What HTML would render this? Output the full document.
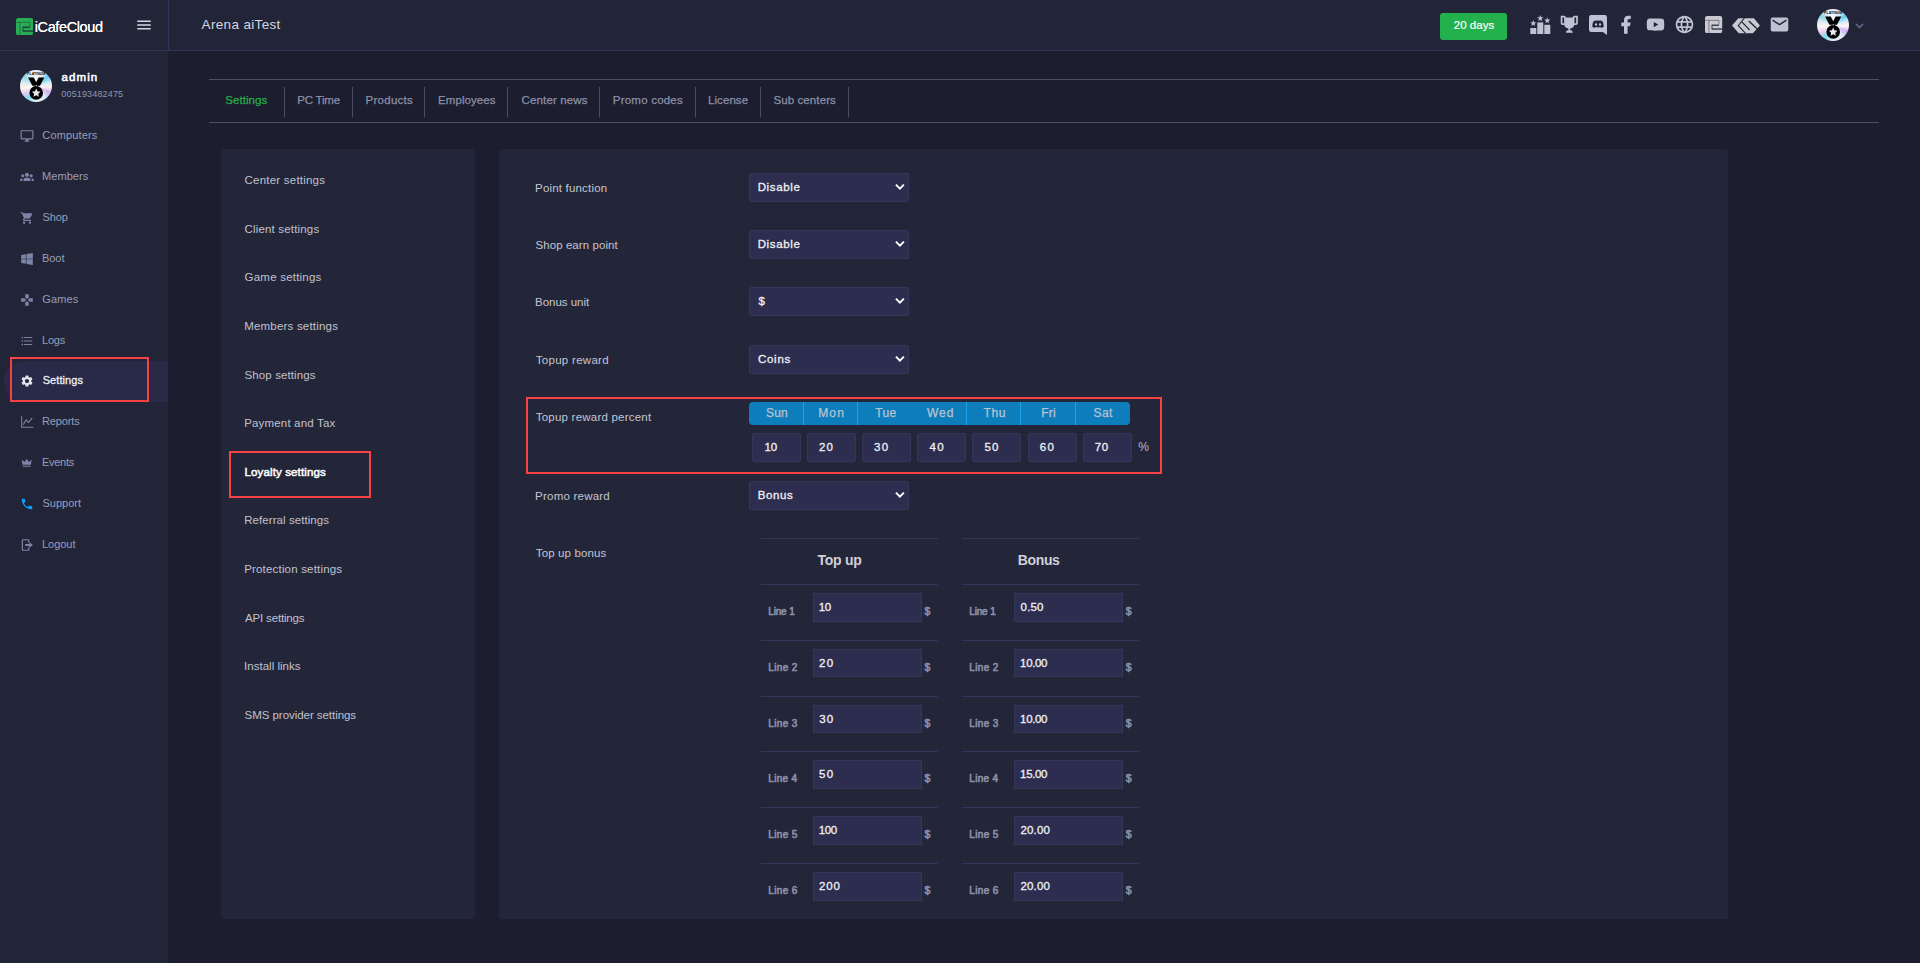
<!DOCTYPE html>
<html lang="en"><head><meta charset="utf-8"><title>iCafeCloud - Loyalty settings</title>
<style>
html,body{margin:0;padding:0}
body{width:1920px;height:963px;overflow:hidden;background:#1c1d2f;font-family:"Liberation Sans", sans-serif;position:relative}
#root{position:absolute;left:0;top:0;width:1920px;height:963px;overflow:hidden}
#root header,#root aside,#root nav,#root main{position:absolute;left:0;top:0;width:0;height:0;display:block}
#root div,#root svg,#root span.t{position:absolute}
span.t{white-space:nowrap;line-height:20px;height:20px}
</style></head><body><div id="root">

<aside class="sidebar">
<div style="left:0px;top:0px;width:168px;height:963px;background:#222538"></div>
<div style="left:4px;top:361px;width:164px;height:41px;background:#282a47;border-radius:20px 0 0 20px"></div>
<div style="left:10px;top:357px;width:139px;height:45px;border:2px solid #f94144;box-sizing:border-box"></div>
<div style="left:20.000000000000004px;top:69.8px;width:32.4px;height:32.4px;border-radius:50%;background:conic-gradient(from 0deg at 50% 52%, #eaeef5 0deg, #e4e4f4 28deg, #4ccaf0 50deg, #d9e8f4 74deg, #fcf0f3 94deg, #c9a2f0 112deg, #d6e6f2 138deg, #e8f0f7 180deg, #6fd6ee 214deg, #e5c4ee 240deg, #fdf3f1 264deg, #dfe8f0 286deg, #86d4e4 310deg, #e6eef6 338deg, #eaeef5 360deg)"></div>
<svg style="left:20.000000000000004px;top:69.8px" width="32.4" height="32.4" viewBox="0 0 32 32">
<defs><radialGradient id="hra" cx="0.5" cy="0.5" r="0.5"><stop offset="0" stop-color="#ffffff" stop-opacity="0.8"/><stop offset="0.5" stop-color="#ffffff" stop-opacity="0.3"/><stop offset="1" stop-color="#ffffff" stop-opacity="0"/></radialGradient></defs>
<circle cx="16" cy="16" r="16" fill="url(#hra)"/>
<text x="16" y="4.900" font-family="Liberation Sans, sans-serif" font-weight="700" font-size="4" text-anchor="middle" fill="#101014" textLength="18" lengthAdjust="spacingAndGlyphs">PLATINUM</text>
<path d="M8 7.300h5.600l2.400 4.800 2.400-4.800H24l-4.200 8.300h-7.600z" fill="#000"/>
<rect x="14.600" y="14.500" width="2.800" height="3" fill="#000"/>
<circle cx="16" cy="22.600" r="6.700" fill="#000"/>
<path d="M16 18.300l1.250 2.750 3 .35-2.200 2.050.6 2.950L16 24.900l-2.650 1.500.6-2.950-2.200-2.050 3-.35z" fill="#e9e6f2"/>
<circle cx="16" cy="15.600" r="0.700" fill="#cfd3e6"/>
</svg>
<svg style="left:20px;top:128.8px;color:#7d84a6;" width="14" height="14" viewBox="0 0 24 24" fill="currentColor" preserveAspectRatio="none"><path d="M21 2H3c-1.1 0-2 .9-2 2v12c0 1.1.9 2 2 2h7v2H8v2h8v-2h-2v-2h7c1.1 0 2-.9 2-2V4c0-1.1-.9-2-2-2zm0 14H3V4h18v12z"/></svg>
<svg style="left:20px;top:169.8px;color:#7d84a6;" width="14" height="14" viewBox="0 0 24 24" fill="currentColor" preserveAspectRatio="none"><circle cx="12" cy="8" r="3.500"/><circle cx="4.800" cy="9.800" r="2.700"/><circle cx="19.200" cy="9.800" r="2.700"/><path d="M5.800 19v-2c0-2.600 3.800-4 6.200-4s6.200 1.400 6.200 4v2z"/><path d="M0 19v-1.700c0-2 2.400-3.200 4.800-3.300-.6.800-.9 1.700-.9 2.900V19zM24 19v-1.700c0-2-2.400-3.200-4.800-3.300.6.800.9 1.700.9 2.900V19z"/></svg>
<svg style="left:20px;top:210.8px;color:#7d84a6;" width="14" height="14" viewBox="0 0 24 24" fill="currentColor" preserveAspectRatio="none"><path d="M7 18c-1.1 0-1.99.9-1.99 2S5.9 22 7 22s2-.9 2-2-.9-2-2-2zM1 2v2h2l3.6 7.59-1.35 2.45c-.16.28-.25.61-.25.96 0 1.1.9 2 2 2h12v-2H7.42c-.14 0-.25-.11-.25-.25l.03-.12.9-1.63h7.45c.75 0 1.41-.41 1.75-1.03l3.58-6.49c.08-.14.12-.31.12-.48 0-.55-.45-1-1-1H5.21l-.94-2H1zm16 16c-1.1 0-1.99.9-1.99 2s.89 2 1.99 2 2-.9 2-2-.9-2-2-2z"/></svg>
<svg style="left:20px;top:251.8px;color:#7d84a6;" width="14" height="14" viewBox="0 0 24 24" fill="currentColor" preserveAspectRatio="none"><path d="M2 5.2l8-1.4v7.7H2zM11 3.6L22 1.8v9.7H11zM2 12.5h8v7.7l-8-1.4zM11 12.5h11v9.7l-11-1.8z"/></svg>
<svg style="left:20px;top:292.8px;color:#7d84a6;" width="14" height="14" viewBox="0 0 24 24" fill="currentColor" preserveAspectRatio="none"><path d="M15 7.5V2H9v5.5l3 3 3-3zM7.5 9H2v6h5.5l3-3-3-3zM9 16.5V22h6v-5.5l-3-3-3 3zM16.5 9l-3 3 3 3H22V9h-5.5z"/></svg>
<svg style="left:20px;top:333.8px;color:#7d84a6;" width="14" height="14" viewBox="0 0 24 24" fill="currentColor" preserveAspectRatio="none"><path d="M4 10.5c-.83 0-1.5.67-1.5 1.5s.67 1.5 1.5 1.5 1.5-.67 1.5-1.5-.67-1.5-1.5-1.5zm0-6c-.83 0-1.5.67-1.5 1.5S3.17 7.5 4 7.5 5.5 6.83 5.5 6 4.83 4.5 4 4.5zm0 12c-.83 0-1.5.68-1.5 1.5s.68 1.5 1.5 1.5 1.5-.68 1.5-1.5-.67-1.5-1.5-1.5zM7 19h14v-2H7v2zm0-6h14v-2H7v2zm0-8v2h14V5H7z"/></svg>
<svg style="left:20px;top:373.8px;color:#e4e5ee;" width="14" height="14" viewBox="0 0 24 24" fill="currentColor" preserveAspectRatio="none"><path d="M19.14 12.94c.04-.3.06-.61.06-.94 0-.32-.02-.64-.07-.94l2.03-1.58c.18-.14.23-.41.12-.61l-1.92-3.32c-.12-.22-.37-.29-.59-.22l-2.39.96c-.5-.38-1.03-.7-1.62-.94l-.36-2.54c-.04-.24-.24-.41-.48-.41h-3.84c-.24 0-.43.17-.47.41l-.36 2.54c-.59.24-1.13.57-1.62.94l-2.39-.96c-.22-.08-.47 0-.59.22L2.74 8.87c-.12.21-.08.47.12.61l2.03 1.58c-.05.3-.09.63-.09.94s.02.64.07.94l-2.03 1.58c-.18.14-.23.41-.12.61l1.92 3.32c.12.22.37.29.59.22l2.39-.96c.5.38 1.03.7 1.62.94l.36 2.54c.05.24.24.41.48.41h3.84c.24 0 .44-.17.47-.41l.36-2.54c.59-.24 1.13-.56 1.62-.94l2.39.96c.22.08.47 0 .59-.22l1.92-3.32c.12-.22.07-.47-.12-.61l-2.01-1.58zM12 15.6c-1.98 0-3.6-1.62-3.6-3.6s1.62-3.6 3.6-3.6 3.6 1.62 3.6 3.6-1.62 3.6-3.6 3.6z"/></svg>
<svg style="left:20px;top:414.8px;color:#7d84a6;" width="14" height="14" viewBox="0 0 24 24" fill="currentColor" preserveAspectRatio="none"><path d="M2 2h1.8v18.2H23V22H2z"/><path d="M5.5 16.5l5-8 4 4.2L21 5" fill="none" stroke="currentColor" stroke-width="1.8" stroke-linejoin="miter"/></svg>
<svg style="left:21.3px;top:457.4px;color:#7d84a6;" width="11.4" height="11.4" viewBox="0 0 24 24" fill="currentColor" preserveAspectRatio="none"><path d="M3 16.5L1.6 5.5l5.6 5.2L12 4l4.8 6.7 5.6-5.2L21 16.5zM3.4 18.2h17.2v2.6H3.4z"/></svg>
<svg style="left:20px;top:496.8px;color:#0aa1ff;" width="14" height="14" viewBox="0 0 24 24" fill="currentColor" preserveAspectRatio="none"><path d="M6.62 10.79c1.44 2.83 3.76 5.14 6.59 6.59l2.2-2.2c.27-.27.67-.36 1.02-.24 1.12.37 2.33.57 3.57.57.55 0 1 .45 1 1V20c0 .55-.45 1-1 1-9.390 0-17-7.610-17-17 0-.55.45-1 1-1h3.5c.55 0 1 .45 1 1 0 1.25.2 2.45.57 3.57.11.35.03.74-.25 1.02l-2.2 2.2z"/></svg>
<svg style="left:20px;top:537.8px;color:#7d84a6;" width="14" height="14" viewBox="0 0 24 24" fill="currentColor" preserveAspectRatio="none"><path d="M5 2h9a2 2 0 0 1 2 2v4h-2V4H5v16h9v-4h2v4a2 2 0 0 1-2 2H5a2 2 0 0 1-2-2V4a2 2 0 0 1 2-2z"/><path d="M9 10.300h7V7.300l6.200 4.700-6.200 4.700v-3H9z"/></svg>
<span class="t" style="left:61.50px;top:67.00px;font-size:11.5px;color:#ffffff;letter-spacing:1.09px;-webkit-text-stroke:0.55px #ffffff">admin</span>
<span class="t" style="left:61.35px;top:84.00px;font-size:9px;color:#8f94b2;letter-spacing:0.15px;">005193482475</span>
<span class="t" style="left:42.35px;top:125.00px;font-size:11px;color:#999db7;letter-spacing:0.14px;">Computers</span>
<span class="t" style="left:42.00px;top:166.00px;font-size:11px;color:#999db7;letter-spacing:0.07px;">Members</span>
<span class="t" style="left:42.45px;top:207.00px;font-size:11px;color:#999db7;letter-spacing:-0.11px;">Shop</span>
<span class="t" style="left:42.00px;top:248.00px;font-size:11px;color:#999db7;letter-spacing:-0.06px;">Boot</span>
<span class="t" style="left:42.35px;top:289.00px;font-size:11px;color:#999db7;letter-spacing:0.11px;">Games</span>
<span class="t" style="left:42.00px;top:330.00px;font-size:11px;color:#999db7;letter-spacing:-0.20px;">Logs</span>
<span class="t" style="left:42.70px;top:370.00px;font-size:11px;color:#eeeef4;letter-spacing:0.08px;-webkit-text-stroke:0.3px #eeeef4">Settings</span>
<span class="t" style="left:42.00px;top:411.00px;font-size:11px;color:#999db7;letter-spacing:-0.13px;">Reports</span>
<span class="t" style="left:42.00px;top:452.00px;font-size:11px;color:#999db7;letter-spacing:-0.28px;">Events</span>
<span class="t" style="left:42.45px;top:493.00px;font-size:11px;color:#999db7;">Support</span>
<span class="t" style="left:42.00px;top:534.00px;font-size:11px;color:#999db7;letter-spacing:-0.04px;">Logout</span>
</aside>
<header class="topbar">
<div style="left:0px;top:0px;width:1920px;height:50px;background:#222538"></div>
<div style="left:0px;top:50px;width:1920px;height:1px;background:#33365a"></div>
<div style="left:168px;top:0px;width:1px;height:50px;background:#33365a"></div>
<div style="left:1440px;top:13px;width:67px;height:27px;background:#22b14c;border-radius:3px"></div>
<svg style="left:16px;top:18px" width="17.2" height="17.2" viewBox="0 0 17 17">
<rect x="0" y="0" width="17" height="17" rx="2.2" fill="#27ae55"/>
<g stroke="#1f2a33" stroke-width="0.8" fill="none" stroke-linecap="butt">
<path d="M0 4.300H13.800" opacity="0.55"/>
<path d="M3.900 4.300V17" opacity="0.55"/>
<path d="M13.800 4.300V8.400" opacity="0.55"/>
<path d="M6.700 9.100H13.800" stroke-width="1.2000000000000002"/>
<path d="M6.900 9.100V12.900"/>
<path d="M6.700 12.900H17" stroke-width="1.2000000000000002"/>
</g></svg>
<svg style="left:1705.4px;top:16.2px" width="17.2" height="17.2" viewBox="0 0 17 17">
<rect x="0" y="0" width="17" height="17" rx="2.2" fill="#c9c9cf"/>
<g stroke="#222439" stroke-width="0.8" fill="none" stroke-linecap="butt">
<path d="M0 4.300H13.800" opacity="0.55"/>
<path d="M3.900 4.300V17" opacity="0.55"/>
<path d="M13.800 4.300V8.400" opacity="0.55"/>
<path d="M6.700 9.100H13.800" stroke-width="1.2000000000000002"/>
<path d="M6.900 9.100V12.900"/>
<path d="M6.700 12.900H17" stroke-width="1.2000000000000002"/>
</g></svg>
<div style="left:1816.8px;top:8.8px;width:32.4px;height:32.4px;border-radius:50%;background:conic-gradient(from 0deg at 50% 52%, #eaeef5 0deg, #e4e4f4 28deg, #4ccaf0 50deg, #d9e8f4 74deg, #fcf0f3 94deg, #c9a2f0 112deg, #d6e6f2 138deg, #e8f0f7 180deg, #6fd6ee 214deg, #e5c4ee 240deg, #fdf3f1 264deg, #dfe8f0 286deg, #86d4e4 310deg, #e6eef6 338deg, #eaeef5 360deg)"></div>
<svg style="left:1816.8px;top:8.8px" width="32.4" height="32.4" viewBox="0 0 32 32">
<defs><radialGradient id="hrb" cx="0.5" cy="0.5" r="0.5"><stop offset="0" stop-color="#ffffff" stop-opacity="0.8"/><stop offset="0.5" stop-color="#ffffff" stop-opacity="0.3"/><stop offset="1" stop-color="#ffffff" stop-opacity="0"/></radialGradient></defs>
<circle cx="16" cy="16" r="16" fill="url(#hrb)"/>
<text x="16" y="4.900" font-family="Liberation Sans, sans-serif" font-weight="700" font-size="4" text-anchor="middle" fill="#101014" textLength="18" lengthAdjust="spacingAndGlyphs">PLATINUM</text>
<path d="M8 7.300h5.600l2.400 4.800 2.400-4.800H24l-4.200 8.300h-7.600z" fill="#000"/>
<rect x="14.600" y="14.500" width="2.800" height="3" fill="#000"/>
<circle cx="16" cy="22.600" r="6.700" fill="#000"/>
<path d="M16 18.300l1.250 2.750 3 .35-2.200 2.050.6 2.950L16 24.900l-2.650 1.500.6-2.950-2.200-2.050 3-.35z" fill="#e9e6f2"/>
<circle cx="16" cy="15.600" r="0.700" fill="#cfd3e6"/>
</svg>
<svg style="left:1529.7px;top:15px" width="21" height="19" viewBox="0 0 21 19" fill="#bfc2d3">
<rect x="0.300" y="13" width="6" height="6"/><rect x="7.300" y="7.400" width="6" height="11.600"/><rect x="14.300" y="9.800" width="6" height="9.200"/>
<polygon points="3.30,5.10 4.11,7.28 6.44,7.38 4.62,8.83 5.24,11.07 3.30,9.79 1.36,11.07 1.98,8.83 0.16,7.38 2.49,7.28"/><polygon points="10.30,0.00 11.14,2.24 13.53,2.35 11.66,3.84 12.30,6.15 10.30,4.83 8.30,6.15 8.94,3.84 7.07,2.35 9.46,2.24"/><polygon points="17.30,2.30 18.11,4.48 20.44,4.58 18.62,6.03 19.24,8.27 17.30,6.99 15.36,8.27 15.98,6.03 14.16,4.58 16.49,4.48"/>
</svg>
<svg style="left:1589px;top:15px" width="18" height="20" viewBox="0 0 18 20">
<path d="M2.200 0H15.800A2.200 2.200 0 0 1 18 2.200V20L13.800 16.900H2.200A2.200 2.200 0 0 1 0 14.700V2.200A2.200 2.200 0 0 1 2.200 0z" fill="#bfc2d3"/>
<path d="M3.300 11.600C3.300 8.600 4.500 6.300 4.500 6.300 5.700 5.400 6.900 5.400 6.900 5.400L7.100 5.700C7.100 5.700 8 5.500 9 5.500S10.900 5.700 10.900 5.700L11.100 5.400C11.100 5.400 12.300 5.400 13.500 6.300 13.500 6.300 14.700 8.600 14.700 11.600 14.700 11.600 13.800 12.900 12 12.900L11.400 12.100C11.400 12.100 10.500 12.500 9 12.500S6.600 12.100 6.600 12.100L6 12.900C4.200 12.900 3.300 11.600 3.300 11.600z" fill="#222439"/>
<ellipse cx="7" cy="9.600" rx="1.100" ry="1.250" fill="#bfc2d3"/><ellipse cx="11" cy="9.600" rx="1.100" ry="1.250" fill="#bfc2d3"/>
</svg>
<svg style="left:1732px;top:17.6px" width="28" height="16" viewBox="0 0 28 16">
<path d="M0 7.600L6.300 .200H21.900L27.900 7.500 20.900 15.200H6.800z" fill="#c9c9cf"/>
<g fill="none" stroke="#222439" stroke-linecap="butt">
<path d="M12.400 0L6.300 7.600 13.500 15.400" stroke-width="1.100"/>
<path d="M9.600 3.700L17.600 12" stroke-width="1.100"/>
<path d="M16.800 3L25 10.700" stroke-width="1.400"/>
</g></svg>
<svg style="left:1855px;top:22.5px" width="9" height="6" viewBox="0 0 9 6"><path d="M1 1l3.500 3.500L8 1" fill="none" stroke="#6c7196" stroke-width="1.300"/></svg>
<svg style="left:134.5px;top:15.5px;color:#d3d4de;" width="18" height="18" viewBox="0 0 24 24" fill="currentColor" preserveAspectRatio="none"><path d="M3 18h18v-2H3v2zm0-5h18v-2H3v2zm0-7v2h18V6H3z"/></svg>
<svg style="left:1558.6px;top:14.4px;color:#bfc2d3;" width="20.6" height="20.4" viewBox="0 0 24 24" fill="currentColor" preserveAspectRatio="none"><path d="M20.2 2H19.5H18C17.100 2 16 3 16 4H8C8 3 6.900 2 6 2H4.500H3.800H2V11C2 12 3 13 4 13H6.200C6.600 15 7.900 16.700 11 17V19.100C8.800 19.300 8 20.400 8 21.700V22H16V21.700C16 20.400 15.200 19.300 13 19.100V17C16.100 16.700 17.400 15 17.800 13H20C21 13 22 12 22 11V2H20.200M4 11V4H6V6V11C5.100 11 4.300 11 4 11M20 11C19.700 11 18.900 11 18 11V6V4H20V11Z"/></svg>
<svg style="left:1614.9px;top:13.6px;color:#bfc2d3;" width="21.6" height="21.6" viewBox="0 0 24 24" fill="currentColor" preserveAspectRatio="none"><path d="M14 13.5h2.5l1-4H14v-2c0-1.030 0-2 2-2h1.500V2.140c-.326-.043-1.557-.14-2.857-.14C11.928 2 10 3.657 10 6.700v2.800H7v4h3V22h4v-8.500z"/></svg>
<svg style="left:1645px;top:14px;color:#bfc2d3;" width="21" height="21" viewBox="0 0 24 24" fill="currentColor" preserveAspectRatio="none"><path d="M10 15l5.190-3L10 9v6m11.560-7.830c.13.47.22 1.100.28 1.900.07.800.1 1.490.1 2.090L22 12c0 2.190-.16 3.800-.44 4.830-.25.900-.83 1.480-1.730 1.730-.47.130-1.330.220-2.650.280-1.300.070-2.490.100-3.590.100L12 19c-4.190 0-6.800-.160-7.830-.440-.900-.250-1.480-.830-1.730-1.730-.130-.470-.220-1.100-.280-1.900-.070-.800-.100-1.490-.100-2.090L2 12c0-2.190.160-3.800.440-4.830.250-.900.830-1.480 1.730-1.730.470-.130 1.330-.220 2.650-.280 1.300-.070 2.490-.100 3.590-.100L12 5c4.190 0 6.800.160 7.830.440.900.250 1.480.830 1.730 1.730z"/></svg>
<svg style="left:1674px;top:14px;color:#bfc2d3;" width="21" height="21" viewBox="0 0 24 24" fill="currentColor" preserveAspectRatio="none"><path d="M11.99 2C6.47 2 2 6.48 2 12s4.47 10 9.99 10C17.52 22 22 17.52 22 12S17.52 2 11.99 2zm6.93 6h-2.95c-.32-1.25-.78-2.45-1.38-3.56 1.84.63 3.37 1.91 4.33 3.56zM12 4.04c.83 1.2 1.48 2.53 1.91 3.960h-3.820c.43-1.43 1.08-2.76 1.91-3.96zM4.26 14C4.1 13.36 4 12.69 4 12s.1-1.36.26-2h3.38c-.08.66-.14 1.32-.14 2 0 .68.06 1.34.14 2H4.26zm.82 2h2.95c.32 1.25.78 2.45 1.38 3.56-1.84-.63-3.37-1.9-4.33-3.56zm2.95-8H5.08c.96-1.66 2.49-2.93 4.33-3.56C8.81 5.55 8.35 6.75 8.03 8zM12 19.96c-.83-1.2-1.48-2.53-1.91-3.96h3.82c-.43 1.43-1.08 2.76-1.91 3.96zM14.34 14H9.66c-.09-.66-.16-1.32-.16-2 0-.68.07-1.35.16-2h4.68c.09.65.16 1.32.16 2 0 .68-.07 1.34-.16 2zm.25 5.56c.6-1.11 1.06-2.31 1.38-3.56h2.95c-.96 1.65-2.49 2.93-4.33 3.56zM16.36 14c.08-.66.14-1.32.14-2 0-.68-.06-1.34-.14-2h3.38c.16.64.26 1.31.26 2s-.1 1.36-.26 2h-3.38z"/></svg>
<svg style="left:1769px;top:14px;color:#bfc2d3;" width="21" height="21" viewBox="0 0 24 24" fill="currentColor" preserveAspectRatio="none"><path d="M20 4H4c-1.1 0-1.99.9-1.99 2L2 18c0 1.1.9 2 2 2h16c1.1 0 2-.9 2-2V6c0-1.100-.9-2-2-2zm0 4l-8 5-8-5V6l8 5 8-5v2z"/></svg>
<span class="t" style="left:201.60px;top:15.00px;font-size:13.5px;color:#d5d6e0;letter-spacing:0.34px;">Arena aiTest</span>
<span class="t" style="left:34.79px;top:16.60px;font-size:14.5px;color:#ffffff;letter-spacing:-0.39px;text-shadow:0 0 0.6px #fff">iCafeCloud</span>
<span class="t" style="left:1453.70px;top:15.00px;font-size:11.5px;color:#ffffff;letter-spacing:0.05px;-webkit-text-stroke:0.2px #fff">20 days</span>
</header>
<nav class="tabs">
<div style="left:209px;top:79px;width:1670px;height:1px;background:#4b4d66"></div>
<div style="left:209px;top:122px;width:1670px;height:1px;background:#4b4d66"></div>
<div style="left:284px;top:87px;width:1px;height:30px;background:#4b4d66"></div>
<div style="left:352px;top:87px;width:1px;height:30px;background:#4b4d66"></div>
<div style="left:424px;top:87px;width:1px;height:30px;background:#4b4d66"></div>
<div style="left:507px;top:87px;width:1px;height:30px;background:#4b4d66"></div>
<div style="left:599px;top:87px;width:1px;height:30px;background:#4b4d66"></div>
<div style="left:695px;top:87px;width:1px;height:30px;background:#4b4d66"></div>
<div style="left:760px;top:87px;width:1px;height:30px;background:#4b4d66"></div>
<div style="left:848px;top:87px;width:1px;height:30px;background:#4b4d66"></div>
<span class="t" style="left:225.15px;top:90.00px;font-size:11.5px;color:#27ae4a;letter-spacing:0.09px;-webkit-text-stroke:0.25px #27ae4a">Settings</span>
<span class="t" style="left:297.25px;top:90.00px;font-size:11.5px;color:#8c90a8;letter-spacing:-0.20px;-webkit-text-stroke:0.25px #8c90a8">PC Time</span>
<span class="t" style="left:365.55px;top:90.00px;font-size:11.5px;color:#8c90a8;letter-spacing:0.26px;-webkit-text-stroke:0.25px #8c90a8">Products</span>
<span class="t" style="left:438.05px;top:90.00px;font-size:11.5px;color:#8c90a8;letter-spacing:0.08px;-webkit-text-stroke:0.25px #8c90a8">Employees</span>
<span class="t" style="left:521.60px;top:90.00px;font-size:11.5px;color:#8c90a8;letter-spacing:0.14px;-webkit-text-stroke:0.25px #8c90a8">Center news</span>
<span class="t" style="left:612.85px;top:90.00px;font-size:11.5px;color:#8c90a8;letter-spacing:0.21px;-webkit-text-stroke:0.25px #8c90a8">Promo codes</span>
<span class="t" style="left:708.05px;top:90.00px;font-size:11.5px;color:#8c90a8;letter-spacing:0.06px;-webkit-text-stroke:0.25px #8c90a8">License</span>
<span class="t" style="left:773.45px;top:90.00px;font-size:11.5px;color:#8c90a8;letter-spacing:0.10px;-webkit-text-stroke:0.25px #8c90a8">Sub centers</span>
</nav>
<nav class="settings-menu">
<div style="left:221px;top:149px;width:254px;height:770px;background:#232539;border-radius:4px"></div>
<div style="left:229px;top:451px;width:142px;height:47px;border:2px solid #f94144;box-sizing:border-box"></div>
<span class="t" style="left:244.55px;top:170.00px;font-size:11.5px;color:#c0c2ce;letter-spacing:0.22px;">Center settings</span>
<span class="t" style="left:244.55px;top:219.00px;font-size:11.5px;color:#c0c2ce;letter-spacing:0.17px;">Client settings</span>
<span class="t" style="left:244.55px;top:267.00px;font-size:11.5px;color:#c0c2ce;letter-spacing:0.22px;">Game settings</span>
<span class="t" style="left:244.20px;top:316.00px;font-size:11.5px;color:#c0c2ce;letter-spacing:0.20px;">Members settings</span>
<span class="t" style="left:244.60px;top:365.00px;font-size:11.5px;color:#c0c2ce;letter-spacing:0.10px;">Shop settings</span>
<span class="t" style="left:244.20px;top:413.00px;font-size:11.5px;color:#c0c2ce;letter-spacing:0.17px;">Payment and Tax</span>
<span class="t" style="left:244.45px;top:462.00px;font-size:11.5px;color:#ffffff;letter-spacing:0.14px;-webkit-text-stroke:0.5px #ffffff">Loyalty settings</span>
<span class="t" style="left:244.20px;top:510.00px;font-size:11.5px;color:#c0c2ce;letter-spacing:0.07px;">Referral settings</span>
<span class="t" style="left:244.20px;top:559.00px;font-size:11.5px;color:#c0c2ce;letter-spacing:0.18px;">Protection settings</span>
<span class="t" style="left:245.10px;top:608.00px;font-size:11.5px;color:#c0c2ce;letter-spacing:-0.18px;">API settings</span>
<span class="t" style="left:244.05px;top:656.00px;font-size:11.5px;color:#c0c2ce;letter-spacing:0.02px;">Install links</span>
<span class="t" style="left:244.60px;top:705.00px;font-size:11.5px;color:#c0c2ce;letter-spacing:-0.05px;">SMS provider settings</span>
</nav>
<main class="loyalty-form">
<div style="left:499px;top:149px;width:1229px;height:770px;background:#232539;border-radius:4px 4px 0 0"></div>
<div style="left:526px;top:397px;width:636px;height:77px;border:2px solid #f94144;box-sizing:border-box"></div>
<div style="left:749px;top:173px;width:160px;height:29px;background:#2d2e4f;border:1px solid #34365a;box-sizing:border-box;border-radius:2px"></div>
<div style="left:749px;top:230px;width:160px;height:29px;background:#2d2e4f;border:1px solid #34365a;box-sizing:border-box;border-radius:2px"></div>
<div style="left:749px;top:287px;width:160px;height:29px;background:#2d2e4f;border:1px solid #34365a;box-sizing:border-box;border-radius:2px"></div>
<div style="left:749px;top:345px;width:160px;height:29px;background:#2d2e4f;border:1px solid #34365a;box-sizing:border-box;border-radius:2px"></div>
<div style="left:749px;top:481px;width:160px;height:29px;background:#2d2e4f;border:1px solid #34365a;box-sizing:border-box;border-radius:2px"></div>
<div style="left:749px;top:402px;width:381px;height:23px;background:#0e7dbc;border-radius:4px"></div>
<div style="left:803px;top:402px;width:1px;height:23px;background:#1ca4ea"></div>
<div style="left:857px;top:402px;width:1px;height:23px;background:#1ca4ea"></div>
<div style="left:966px;top:402px;width:1px;height:23px;background:#1ca4ea"></div>
<div style="left:1020px;top:402px;width:1px;height:23px;background:#1ca4ea"></div>
<div style="left:1075px;top:402px;width:1px;height:23px;background:#1ca4ea"></div>
<div style="left:752px;top:433px;width:49px;height:29px;background:#2d2e4f;border:1px solid #34365a;box-sizing:border-box;border-radius:2px"></div>
<div style="left:807px;top:433px;width:49px;height:29px;background:#2d2e4f;border:1px solid #34365a;box-sizing:border-box;border-radius:2px"></div>
<div style="left:862px;top:433px;width:49px;height:29px;background:#2d2e4f;border:1px solid #34365a;box-sizing:border-box;border-radius:2px"></div>
<div style="left:917px;top:433px;width:49px;height:29px;background:#2d2e4f;border:1px solid #34365a;box-sizing:border-box;border-radius:2px"></div>
<div style="left:972px;top:433px;width:49px;height:29px;background:#2d2e4f;border:1px solid #34365a;box-sizing:border-box;border-radius:2px"></div>
<div style="left:1028px;top:433px;width:49px;height:29px;background:#2d2e4f;border:1px solid #34365a;box-sizing:border-box;border-radius:2px"></div>
<div style="left:1083px;top:433px;width:49px;height:29px;background:#2d2e4f;border:1px solid #34365a;box-sizing:border-box;border-radius:2px"></div>
<div style="left:761px;top:538px;width:177px;height:1px;background:#33355a"></div>
<div style="left:962px;top:538px;width:177px;height:1px;background:#33355a"></div>
<div style="left:761px;top:584px;width:177px;height:1px;background:#33355a"></div>
<div style="left:962px;top:584px;width:177px;height:1px;background:#33355a"></div>
<div style="left:761px;top:640px;width:177px;height:1px;background:#33355a"></div>
<div style="left:962px;top:640px;width:177px;height:1px;background:#33355a"></div>
<div style="left:761px;top:696px;width:177px;height:1px;background:#33355a"></div>
<div style="left:962px;top:696px;width:177px;height:1px;background:#33355a"></div>
<div style="left:761px;top:751px;width:177px;height:1px;background:#33355a"></div>
<div style="left:962px;top:751px;width:177px;height:1px;background:#33355a"></div>
<div style="left:761px;top:807px;width:177px;height:1px;background:#33355a"></div>
<div style="left:962px;top:807px;width:177px;height:1px;background:#33355a"></div>
<div style="left:761px;top:863px;width:177px;height:1px;background:#33355a"></div>
<div style="left:962px;top:863px;width:177px;height:1px;background:#33355a"></div>
<div style="left:813px;top:593px;width:109px;height:29px;background:#2d2e4f;border:1px solid #34365a;box-sizing:border-box"></div>
<div style="left:1014px;top:593px;width:109px;height:29px;background:#2d2e4f;border:1px solid #34365a;box-sizing:border-box"></div>
<div style="left:813px;top:649px;width:109px;height:28px;background:#2d2e4f;border:1px solid #34365a;box-sizing:border-box"></div>
<div style="left:1014px;top:649px;width:109px;height:28px;background:#2d2e4f;border:1px solid #34365a;box-sizing:border-box"></div>
<div style="left:813px;top:705px;width:109px;height:28px;background:#2d2e4f;border:1px solid #34365a;box-sizing:border-box"></div>
<div style="left:1014px;top:705px;width:109px;height:28px;background:#2d2e4f;border:1px solid #34365a;box-sizing:border-box"></div>
<div style="left:813px;top:760px;width:109px;height:29px;background:#2d2e4f;border:1px solid #34365a;box-sizing:border-box"></div>
<div style="left:1014px;top:760px;width:109px;height:29px;background:#2d2e4f;border:1px solid #34365a;box-sizing:border-box"></div>
<div style="left:813px;top:816px;width:109px;height:29px;background:#2d2e4f;border:1px solid #34365a;box-sizing:border-box"></div>
<div style="left:1014px;top:816px;width:109px;height:29px;background:#2d2e4f;border:1px solid #34365a;box-sizing:border-box"></div>
<div style="left:813px;top:872px;width:109px;height:29px;background:#2d2e4f;border:1px solid #34365a;box-sizing:border-box"></div>
<div style="left:1014px;top:872px;width:109px;height:29px;background:#2d2e4f;border:1px solid #34365a;box-sizing:border-box"></div>
<svg style="left:894px;top:182.9px" width="12" height="8" viewBox="0 0 12 8"><path d="M1.900 1.600L5.900 5.600l4-4" fill="none" stroke="#ffffff" stroke-width="1.900" stroke-linecap="butt"/></svg>
<svg style="left:894px;top:239.9px" width="12" height="8" viewBox="0 0 12 8"><path d="M1.900 1.600L5.900 5.600l4-4" fill="none" stroke="#ffffff" stroke-width="1.900" stroke-linecap="butt"/></svg>
<svg style="left:894px;top:296.9px" width="12" height="8" viewBox="0 0 12 8"><path d="M1.900 1.600L5.900 5.600l4-4" fill="none" stroke="#ffffff" stroke-width="1.900" stroke-linecap="butt"/></svg>
<svg style="left:894px;top:354.9px" width="12" height="8" viewBox="0 0 12 8"><path d="M1.900 1.600L5.900 5.600l4-4" fill="none" stroke="#ffffff" stroke-width="1.900" stroke-linecap="butt"/></svg>
<svg style="left:894px;top:490.9px" width="12" height="8" viewBox="0 0 12 8"><path d="M1.900 1.600L5.900 5.600l4-4" fill="none" stroke="#ffffff" stroke-width="1.900" stroke-linecap="butt"/></svg>
<span class="t" style="left:757.65px;top:177.00px;font-size:11.5px;color:#f0f0f5;letter-spacing:0.64px;-webkit-text-stroke:0.3px #f0f0f5">Disable</span>
<span class="t" style="left:757.65px;top:234.00px;font-size:11.5px;color:#f0f0f5;letter-spacing:0.64px;-webkit-text-stroke:0.3px #f0f0f5">Disable</span>
<span class="t" style="left:758.45px;top:291.00px;font-size:11.5px;color:#f0f0f5;-webkit-text-stroke:0.3px #f0f0f5">$</span>
<span class="t" style="left:758.00px;top:349.00px;font-size:11.5px;color:#f0f0f5;letter-spacing:0.71px;-webkit-text-stroke:0.3px #f0f0f5">Coins</span>
<span class="t" style="left:757.65px;top:485.00px;font-size:11.5px;color:#f0f0f5;letter-spacing:0.65px;-webkit-text-stroke:0.3px #f0f0f5">Bonus</span>
<span class="t" style="left:765.95px;top:403.00px;font-size:12px;color:#b9c3d2;letter-spacing:0.21px;-webkit-text-stroke:0.25px #b9c3d2">Sun</span>
<span class="t" style="left:818.20px;top:403.00px;font-size:12px;color:#b9c3d2;letter-spacing:1.19px;-webkit-text-stroke:0.25px #b9c3d2">Mon</span>
<span class="t" style="left:875.20px;top:403.00px;font-size:12px;color:#b9c3d2;letter-spacing:0.37px;-webkit-text-stroke:0.25px #b9c3d2">Tue</span>
<span class="t" style="left:926.90px;top:403.00px;font-size:12px;color:#b9c3d2;letter-spacing:1.01px;-webkit-text-stroke:0.25px #b9c3d2">Wed</span>
<span class="t" style="left:983.60px;top:403.00px;font-size:12px;color:#b9c3d2;letter-spacing:0.57px;-webkit-text-stroke:0.25px #b9c3d2">Thu</span>
<span class="t" style="left:1041.20px;top:403.00px;font-size:12px;color:#b9c3d2;letter-spacing:0.26px;-webkit-text-stroke:0.25px #b9c3d2">Fri</span>
<span class="t" style="left:1093.55px;top:403.00px;font-size:12px;color:#b9c3d2;letter-spacing:0.44px;-webkit-text-stroke:0.25px #b9c3d2">Sat</span>
<span class="t" style="left:764.60px;top:437.00px;font-size:11.5px;color:#f0f0f5;letter-spacing:-0.35px;-webkit-text-stroke:0.3px #f0f0f5">10</span>
<span class="t" style="left:819.10px;top:437.00px;font-size:11.5px;color:#f0f0f5;letter-spacing:1.10px;-webkit-text-stroke:0.3px #f0f0f5">20</span>
<span class="t" style="left:874.00px;top:437.00px;font-size:11.5px;color:#f0f0f5;letter-spacing:1.35px;-webkit-text-stroke:0.3px #f0f0f5">30</span>
<span class="t" style="left:929.40px;top:437.00px;font-size:11.5px;color:#f0f0f5;letter-spacing:1.40px;-webkit-text-stroke:0.3px #f0f0f5">40</span>
<span class="t" style="left:984.50px;top:437.00px;font-size:11.5px;color:#f0f0f5;letter-spacing:1.10px;-webkit-text-stroke:0.3px #f0f0f5">50</span>
<span class="t" style="left:1039.80px;top:437.00px;font-size:11.5px;color:#f0f0f5;letter-spacing:1.20px;-webkit-text-stroke:0.3px #f0f0f5">60</span>
<span class="t" style="left:1094.80px;top:437.00px;font-size:11.5px;color:#f0f0f5;letter-spacing:0.50px;-webkit-text-stroke:0.3px #f0f0f5">70</span>
<span class="t" style="left:1138.20px;top:437.00px;font-size:12px;color:#b6b8c6;">%</span>
<span class="t" style="left:817.60px;top:550.00px;font-size:14px;color:#cfd0d8;font-weight:700;letter-spacing:-0.29px;">Top up</span>
<span class="t" style="left:1017.73px;top:550.00px;font-size:14px;color:#cfd0d8;font-weight:700;letter-spacing:-0.35px;">Bonus</span>
<span class="t" style="left:768.25px;top:602.00px;font-size:10px;color:#8d90a8;letter-spacing:-0.16px;-webkit-text-stroke:0.6px #8d90a8">Line 1</span>
<span class="t" style="left:969.25px;top:602.00px;font-size:10px;color:#8d90a8;letter-spacing:-0.16px;-webkit-text-stroke:0.6px #8d90a8">Line 1</span>
<span class="t" style="left:924.55px;top:601.00px;font-size:10.5px;color:#8d90a8;-webkit-text-stroke:0.6px #8d90a8">$</span>
<span class="t" style="left:1125.85px;top:601.00px;font-size:10.5px;color:#8d90a8;-webkit-text-stroke:0.6px #8d90a8">$</span>
<span class="t" style="left:818.70px;top:597.00px;font-size:11.5px;color:#f0f0f5;letter-spacing:-0.35px;-webkit-text-stroke:0.3px #f0f0f5">10</span>
<span class="t" style="left:1020.55px;top:597.00px;font-size:11.5px;color:#f0f0f5;letter-spacing:0.19px;-webkit-text-stroke:0.3px #f0f0f5">0.50</span>
<span class="t" style="left:768.25px;top:658.00px;font-size:10px;color:#8d90a8;letter-spacing:0.36px;-webkit-text-stroke:0.6px #8d90a8">Line 2</span>
<span class="t" style="left:969.25px;top:658.00px;font-size:10px;color:#8d90a8;letter-spacing:0.36px;-webkit-text-stroke:0.6px #8d90a8">Line 2</span>
<span class="t" style="left:924.55px;top:657.00px;font-size:10.5px;color:#8d90a8;-webkit-text-stroke:0.6px #8d90a8">$</span>
<span class="t" style="left:1125.85px;top:657.00px;font-size:10.5px;color:#8d90a8;-webkit-text-stroke:0.6px #8d90a8">$</span>
<span class="t" style="left:819.00px;top:653.00px;font-size:11.5px;color:#f0f0f5;letter-spacing:1.40px;-webkit-text-stroke:0.3px #f0f0f5">20</span>
<span class="t" style="left:1020.10px;top:653.00px;font-size:11.5px;color:#f0f0f5;letter-spacing:-0.35px;-webkit-text-stroke:0.3px #f0f0f5">10.00</span>
<span class="t" style="left:768.25px;top:714.00px;font-size:10px;color:#8d90a8;letter-spacing:0.35px;-webkit-text-stroke:0.6px #8d90a8">Line 3</span>
<span class="t" style="left:969.25px;top:714.00px;font-size:10px;color:#8d90a8;letter-spacing:0.35px;-webkit-text-stroke:0.6px #8d90a8">Line 3</span>
<span class="t" style="left:924.55px;top:713.00px;font-size:10.5px;color:#8d90a8;-webkit-text-stroke:0.6px #8d90a8">$</span>
<span class="t" style="left:1125.85px;top:713.00px;font-size:10.5px;color:#8d90a8;-webkit-text-stroke:0.6px #8d90a8">$</span>
<span class="t" style="left:819.15px;top:709.00px;font-size:11.5px;color:#f0f0f5;letter-spacing:1.25px;-webkit-text-stroke:0.3px #f0f0f5">30</span>
<span class="t" style="left:1020.10px;top:709.00px;font-size:11.5px;color:#f0f0f5;letter-spacing:-0.35px;-webkit-text-stroke:0.3px #f0f0f5">10.00</span>
<span class="t" style="left:768.25px;top:769.00px;font-size:10px;color:#8d90a8;letter-spacing:0.32px;-webkit-text-stroke:0.6px #8d90a8">Line 4</span>
<span class="t" style="left:969.25px;top:769.00px;font-size:10px;color:#8d90a8;letter-spacing:0.32px;-webkit-text-stroke:0.6px #8d90a8">Line 4</span>
<span class="t" style="left:924.55px;top:768.00px;font-size:10.5px;color:#8d90a8;-webkit-text-stroke:0.6px #8d90a8">$</span>
<span class="t" style="left:1125.85px;top:768.00px;font-size:10.5px;color:#8d90a8;-webkit-text-stroke:0.6px #8d90a8">$</span>
<span class="t" style="left:819.10px;top:764.00px;font-size:11.5px;color:#f0f0f5;letter-spacing:1.30px;-webkit-text-stroke:0.3px #f0f0f5">50</span>
<span class="t" style="left:1020.10px;top:764.00px;font-size:11.5px;color:#f0f0f5;letter-spacing:-0.35px;-webkit-text-stroke:0.3px #f0f0f5">15.00</span>
<span class="t" style="left:768.25px;top:825.00px;font-size:10px;color:#8d90a8;letter-spacing:0.35px;-webkit-text-stroke:0.6px #8d90a8">Line 5</span>
<span class="t" style="left:969.25px;top:825.00px;font-size:10px;color:#8d90a8;letter-spacing:0.35px;-webkit-text-stroke:0.6px #8d90a8">Line 5</span>
<span class="t" style="left:924.55px;top:824.00px;font-size:10.5px;color:#8d90a8;-webkit-text-stroke:0.6px #8d90a8">$</span>
<span class="t" style="left:1125.85px;top:824.00px;font-size:10.5px;color:#8d90a8;-webkit-text-stroke:0.6px #8d90a8">$</span>
<span class="t" style="left:818.70px;top:820.00px;font-size:11.5px;color:#f0f0f5;letter-spacing:-0.35px;-webkit-text-stroke:0.3px #f0f0f5">100</span>
<span class="t" style="left:1020.40px;top:820.00px;font-size:11.5px;color:#f0f0f5;letter-spacing:0.20px;-webkit-text-stroke:0.3px #f0f0f5">20.00</span>
<span class="t" style="left:768.25px;top:881.00px;font-size:10px;color:#8d90a8;letter-spacing:0.35px;-webkit-text-stroke:0.6px #8d90a8">Line 6</span>
<span class="t" style="left:969.25px;top:881.00px;font-size:10px;color:#8d90a8;letter-spacing:0.35px;-webkit-text-stroke:0.6px #8d90a8">Line 6</span>
<span class="t" style="left:924.55px;top:880.00px;font-size:10.5px;color:#8d90a8;-webkit-text-stroke:0.6px #8d90a8">$</span>
<span class="t" style="left:1125.85px;top:880.00px;font-size:10.5px;color:#8d90a8;-webkit-text-stroke:0.6px #8d90a8">$</span>
<span class="t" style="left:819.00px;top:876.00px;font-size:11.5px;color:#f0f0f5;letter-spacing:0.90px;-webkit-text-stroke:0.3px #f0f0f5">200</span>
<span class="t" style="left:1020.40px;top:876.00px;font-size:11.5px;color:#f0f0f5;letter-spacing:0.20px;-webkit-text-stroke:0.3px #f0f0f5">20.00</span>
<span class="t" style="left:535.10px;top:178.00px;font-size:11.5px;color:#c3c5d0;letter-spacing:0.18px;">Point function</span>
<span class="t" style="left:535.50px;top:235.00px;font-size:11.5px;color:#c3c5d0;letter-spacing:0.07px;">Shop earn point</span>
<span class="t" style="left:535.10px;top:292.00px;font-size:11.5px;color:#c3c5d0;letter-spacing:-0.03px;">Bonus unit</span>
<span class="t" style="left:535.75px;top:350.00px;font-size:11.5px;color:#c3c5d0;letter-spacing:0.29px;">Topup reward</span>
<span class="t" style="left:535.75px;top:407.00px;font-size:11.5px;color:#c3c5d0;letter-spacing:0.22px;">Topup reward percent</span>
<span class="t" style="left:535.10px;top:486.00px;font-size:11.5px;color:#c3c5d0;letter-spacing:0.22px;">Promo reward</span>
<span class="t" style="left:535.75px;top:543.00px;font-size:11.5px;color:#c3c5d0;letter-spacing:0.13px;">Top up bonus</span>
</main>
</div></body></html>
